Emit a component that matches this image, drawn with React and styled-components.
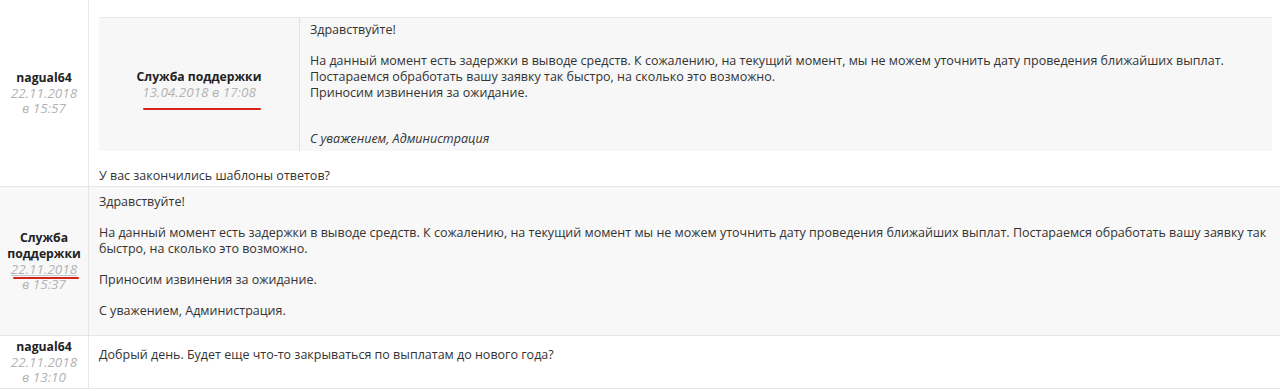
import styled, { createGlobalStyle } from "styled-components";

const Global = createGlobalStyle`
  body {
    margin: 0;
    background: #fff;
    font-family: "Open Sans", "Noto Sans", sans-serif;
    font-size: 12.5px;
    color: #333;
  }
`;

const Thread = styled.div`
  width: 1280px;
`;

const Row = styled.div`
  display: grid;
  grid-template-columns: 89px 1fr;
  border-bottom: 1px solid #e6e6e6;
  background: ${(p) => (p.$shaded ? "#f8f8f8" : "#fff")};
`;

const Author = styled.div`
  border-right: 1px solid #e6e6e6;
  display: flex;
  flex-direction: column;
  align-items: center;
  justify-content: center;
  text-align: center;
  padding: 0 4px;
`;

const Name = styled.div`
  font-weight: 700;
  font-size: 12.2px;
  color: #222;
  line-height: 16px;
`;

const Date = styled.div`
  font-style: italic;
  font-size: 13.5px;
  color: #b3b3b3;
  line-height: 15.5px;
`;

const Mark = styled.span`
  position: relative;
  text-decoration: ${(p) => (p.$link ? "underline" : "none")};
  text-decoration-color: #c4c4c4;
  &::after {
    content: "";
    position: absolute;
    left: ${(p) => p.$left || 0}px;
    right: ${(p) => p.$right || 0}px;
    bottom: ${(p) => p.$bottom || 0}px;
    height: 2px;
    border-radius: 1px;
    background: #d8231a;
  }
`;

const Body = styled.div`
  display: flex;
  flex-direction: column;
  justify-content: center;
  padding: ${(p) => p.$pad || "6px 10px 2px"};
  line-height: 16px;
  p {
    margin: 0 0 15px;
  }
  p:last-child {
    margin-bottom: ${(p) => p.$tail ?? 15}px;
  }
`;

const Quote = styled.div`
  display: grid;
  grid-template-columns: 201px 1fr;
  background: #f7f7f7;
  border-top: 1px solid #e9e9e9;
  margin: 11px -2px 17px 0;
`;

const QuoteAuthor = styled.div`
  border-right: 1px solid #e2e2e2;
  display: flex;
  flex-direction: column;
  align-items: center;
  justify-content: center;
  text-align: center;
`;

const QuoteText = styled.div`
  padding: 4px 10px 4px;
  p {
    margin: 0 0 15px;
  }
  p:last-child {
    margin: 30px 0 0;
    font-style: italic;
  }
`;

export default function App() {
  return (
    <Thread>
      <Global />
      <Row>
        <Author>
          <Name>nagual64</Name>
          <Date>22.11.2018<br />в 15:57</Date>
        </Author>
        <Body $tail={0}>
          <Quote>
            <QuoteAuthor>
              <Name>Служба поддержки</Name>
              <Date>
                <Mark $left={1} $right={-5} $bottom={-9}>13.04.2018 в 17:08</Mark>
              </Date>
            </QuoteAuthor>
            <QuoteText>
              <p>Здравствуйте!</p>
              <p style={{ margin: 0 }}>
                На данный момент есть задержки в выводе средств. К сожалению, на текущий момент, мы не можем уточнить дату проведения ближайших выплат.
                <br />
                Постараемся обработать вашу заявку так быстро, на сколько это возможно.
                <br />
                Приносим извинения за ожидание.
              </p>
              <p>С уважением, Администрация</p>
            </QuoteText>
          </Quote>
          <p>У вас закончились шаблоны ответов?</p>
        </Body>
      </Row>
      <Row $shaded>
        <Author>
          <Name>Служба поддержки</Name>
          <Date>
            <Mark $link $left={2} $right={-2} $bottom={-1}>22.11.2018</Mark>
            <br />в 15:37
          </Date>
        </Author>
        <Body $pad="7px 10px 2px" $tail={14}>
          <p>Здравствуйте!</p>
          <p>
            На данный момент есть задержки в выводе средств. К сожалению, на текущий момент мы не можем уточнить дату проведения ближайших выплат. Постараемся обработать вашу заявку так быстро, на сколько это возможно.
          </p>
          <p>Приносим извинения за ожидание.</p>
          <p>С уважением, Администрация.</p>
        </Body>
      </Row>
      <Row>
        <Author>
          <Name>nagual64</Name>
          <Date>22.11.2018<br />в 13:10</Date>
        </Author>
        <Body $pad="11px 10px 5px" $tail={20}>
          <p>Добрый день. Будет еще что-то закрываться по выплатам до нового года?</p>
        </Body>
      </Row>
    </Thread>
  );
}
